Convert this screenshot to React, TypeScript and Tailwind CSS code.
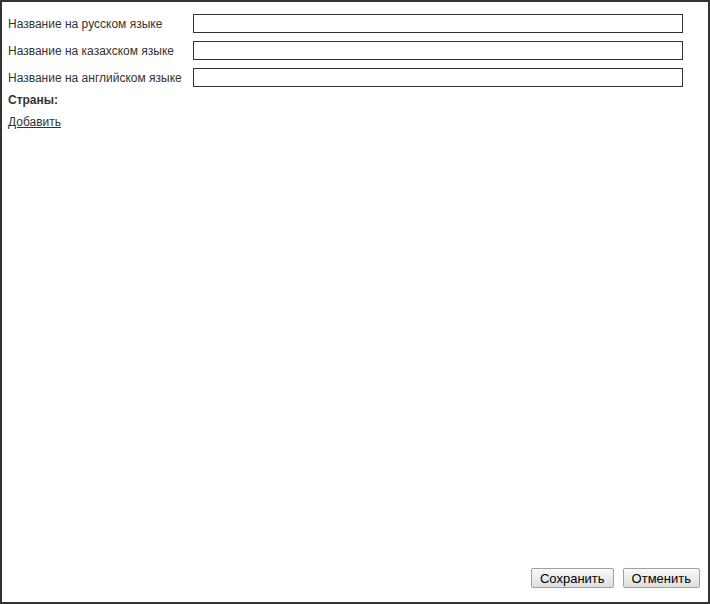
import { useState } from 'react';

const labels = [
  'Название на русском языке',
  'Название на казахском языке',
  'Название на английском языке',
];

export default function App() {
  const [values, setValues] = useState(['', '', '']);

  return (
    <div className="w-[710px] h-[604px] border-2 border-[#333] bg-white flex flex-col font-['Liberation_Sans',Arial,sans-serif] text-[12px] text-[#333]">
      <div className="flex flex-col gap-[8px] pt-[12px] pl-[6px] pr-[25px]">
        {labels.map((label, i) => (
          <div key={label} className="flex items-center h-[19px]">
            <label className="w-[185px] shrink-0">{label}</label>
            <input
              type="text"
              value={values[i]}
              onChange={(e) => setValues(values.map((v, j) => (j === i ? e.target.value : v)))}
              className="flex-1 h-[19px] border border-[#333] bg-white px-1 text-[12px] outline-none"
            />
          </div>
        ))}
      </div>

      <div className="pl-[6px] mt-[6px] font-bold leading-[14px]">Страны:</div>
      <div className="pl-[6px] mt-[8px] leading-[14px]">
        <a href="#" className="underline text-[#333]">Добавить</a>
      </div>

      <div className="flex-1" />

      <div className="flex justify-end gap-[9px] pr-[8px] pb-[14px]">
        <button className="h-[20px] px-[8px] border border-[#a0a0a0] rounded-[2px] bg-gradient-to-b from-[#fafafa] to-[#dedede] text-[13px] text-black leading-none">
          Сохранить
        </button>
        <button className="h-[20px] px-[8px] border border-[#a0a0a0] rounded-[2px] bg-gradient-to-b from-[#fafafa] to-[#dedede] text-[13px] text-black leading-none">
          Отменить
        </button>
      </div>
    </div>
  );
}
